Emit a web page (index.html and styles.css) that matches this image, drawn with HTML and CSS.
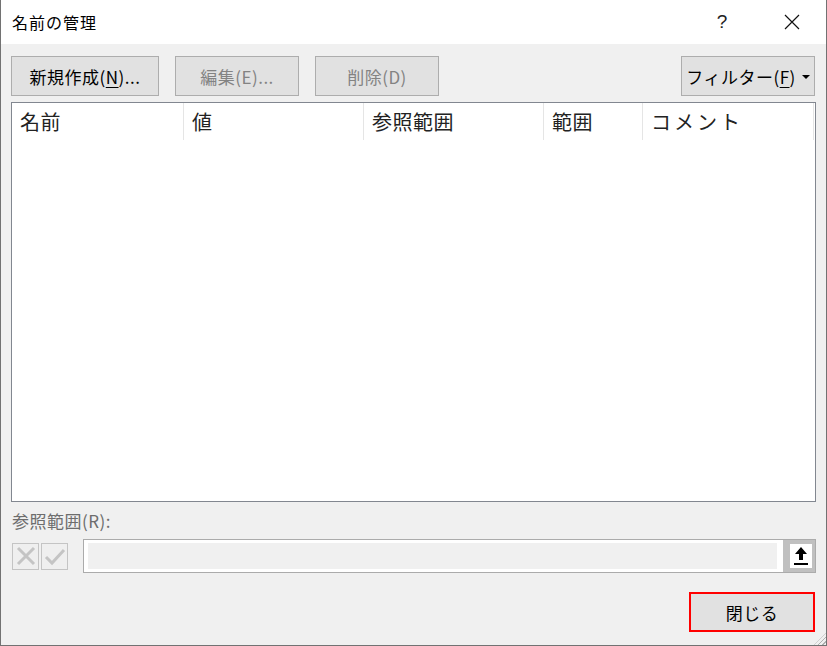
FILE: index.html
```html
<!DOCTYPE html>
<html lang="ja">
<head>
  <meta charset="UTF-8" />
  <title>名前の管理</title>
  <link rel="stylesheet" href="styles.css">
</head>
<body>
  <div class="dialog">
    <!-- Titelleiste -->
    <div class="titlebar">
      <div class="title">名前の管理</div>
      <div class="title-btn help">?</div>
      <div class="title-btn close">
        <svg width="16" height="16" viewBox="0 0 16 16"><path d="M1 1 L15 15 M15 1 L1 15" stroke="#111" stroke-width="1.2" fill="none"/></svg>
      </div>
    </div>

    <div class="content">
      <div class="toolbar">
        <button class="btn btn-new">新規作成(<u>N</u>)...</button>
        <button class="btn btn-edit disabled">編集(E)...</button>
        <button class="btn btn-del disabled">削除(D)</button>
        <div class="spacer"></div>
        <button class="btn btn-filter">フィルター(<u>F</u>) <span class="caret"></span></button>
      </div>

      <div class="list">
        <div class="list-header">
          <div class="col col-name">名前</div>
          <div class="col col-value">値</div>
          <div class="col col-ref">参照範囲</div>
          <div class="col col-scope">範囲</div>
          <div class="col col-comment">コメント</div>
        </div>
      </div>

      <div class="ref-label">参照範囲(R):</div>
      <div class="ref-row">
        <div class="mini-btn">
          <svg width="22" height="22" viewBox="0 0 22 22"><path d="M3 3 L19 19 M19 3 L3 19" stroke="#c4c4c4" stroke-width="3" fill="none"/></svg>
        </div>
        <div class="mini-btn">
          <svg width="22" height="22" viewBox="0 0 22 22"><path d="M2 12 L8 18 L20 5" stroke="#c4c4c4" stroke-width="3" fill="none"/></svg>
        </div>
        <div class="ref-input">
          <div class="ref-field"></div>
          <div class="ref-pick">
            <svg width="16" height="20" viewBox="0 0 16 20"><path d="M8 1 L14 8 L10 8 L10 14 L6 14 L6 8 L2 8 Z" fill="#000"/><rect x="1" y="17" width="14" height="2" fill="#000"/></svg>
          </div>
        </div>
      </div>

      <div class="footer">
        <button class="btn btn-close">閉じる</button>
      </div>
    </div>
    <div class="grip"></div>
  </div>
</body>
</html>
```

FILE: styles.css
```css
body {
  margin: 0;
  font-family: "Noto Sans CJK JP", "Noto Sans", sans-serif;
  background: #f0f0f0;
  overflow: hidden;
}

.dialog {
  position: relative;
  width: 825px;
  height: 645px;
  border: 1px solid #727272;
  border-top: none;
  background: #f0f0f0;
  display: flex;
  flex-direction: column;
}

/* Titelleiste */
.titlebar {
  height: 44px;
  background: #fff;
  display: flex;
  align-items: center;
  padding-left: 11px;
}

.title {
  flex: 1;
  font-size: 16px;
  letter-spacing: 1px;
  color: #000;
}

.title-btn {
  width: 46px;
  height: 44px;
  display: flex;
  align-items: center;
  justify-content: center;
}

.help {
  font-family: "Liberation Sans", sans-serif;
  font-size: 19px;
  color: #222;
  margin-right: 24px;
}

.close {
  margin-right: 11px;
}

.content {
  flex: 1;
  display: flex;
  flex-direction: column;
  padding: 12px 11px 0 10px;
}

/* Buttons */
.toolbar {
  display: flex;
  gap: 16px;
  height: 40px;
}

.spacer {
  flex: 1;
}

.btn {
  height: 40px;
  background: #e1e1e1;
  border: 1px solid #adadad;
  font-family: "Noto Sans CJK JP", "Noto Sans", sans-serif;
  font-size: 17px;
  letter-spacing: 0.5px;
  color: #000;
  padding: 0;
  display: flex;
  align-items: center;
  justify-content: center;
}

.btn u {
  text-underline-offset: 3px;
}

.btn.disabled {
  color: #838383;
}

.btn-new { width: 148px; }
.btn-edit { width: 124px; }
.btn-del { width: 124px; }
.btn-filter { width: 134px; }

.caret {
  display: inline-block;
  width: 0;
  height: 0;
  border-left: 4px solid transparent;
  border-right: 4px solid transparent;
  border-top: 4px solid #000;
  margin-left: 6px;
  margin-top: 2px;
}

/* Liste */
.list {
  margin-top: 6px;
  margin-right: -1px;
  height: 398px;
  background: #fff;
  border: 1px solid #828790;
}

.list-header {
  display: flex;
  height: 37px;
  align-items: center;
}

.col {
  height: 37px;
  display: flex;
  align-items: center;
  font-size: 20px;
  letter-spacing: 0.5px;
  color: #222;
  padding-left: 8px;
  border-right: 1px solid #e5e5e5;
  box-sizing: border-box;
}

.col-name { width: 172px; }
.col-value { width: 180px; }
.col-ref { width: 180px; }
.col-scope { width: 99px; }
.col-comment { width: 171px; letter-spacing: 3px; }

/* Bezug */
.ref-label {
  margin-top: 8px;
  margin-left: 1px;
  font-size: 17px;
  letter-spacing: 0.5px;
  color: #6d6d6d;
  height: 22px;
  line-height: 22px;
}

.ref-row {
  display: flex;
  align-items: center;
  margin-top: 7px;
  margin-left: 1px;
  margin-right: -1px;
}

.mini-btn {
  width: 27px;
  height: 27px;
  border: 1px solid #c4c4c4;
  background: #efefef;
  display: flex;
  align-items: center;
  justify-content: center;
  margin-right: 2px;
  box-sizing: border-box;
}

.ref-input {
  margin-left: 13px;
  flex: 1;
  height: 34px;
  border: 1px solid #ababab;
  box-sizing: border-box;
  background: #fff;
  display: flex;
}

.ref-field {
  flex: 1;
  margin: 3px 6px 3px 4px;
  background: #f0f0f0;
}

.ref-pick {
  width: 32px;
  border-left: 3px solid #c0c0c0;
  background: #c0c0c0;
  box-sizing: border-box;
  display: flex;
  align-items: center;
  justify-content: center;
}

.ref-pick svg {
  background: #fff;
  padding: 2px 3px;
}

.footer {
  display: flex;
  justify-content: flex-end;
  margin-top: 19px;
}

.btn-close {
  width: 126px;
  border: 2px solid #ff0000;
}

.grip {
  position: absolute;
  right: 0;
  bottom: 0;
  width: 12px;
  height: 12px;
  background: repeating-linear-gradient(135deg, transparent 0 2px, #b0b0b0 2px 3px);
  clip-path: polygon(100% 0, 100% 100%, 0 100%);
}
```
